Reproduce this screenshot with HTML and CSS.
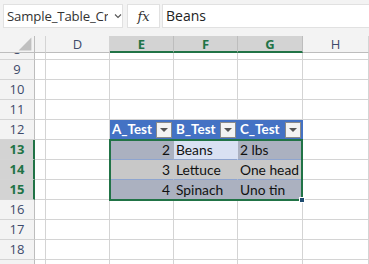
FILE: index.html
```html
<!DOCTYPE html>
<html>
<head>
<meta charset="utf-8">
<link rel="stylesheet" href="styles.css">
</head>
<body>
<div class="app">
  <div class="bar">
    <div class="namebox"><span class="nametext">Sample_Table_Cr</span><svg class="chev" width="8" height="6" viewBox="0 0 8 6"><path d="M1 1.5 L4 4.5 L7 1.5" fill="none" stroke="#555" stroke-width="1.1"/></svg></div>
    <div class="fxbox"><span class="fx">fx</span></div>
    <div class="formula">Beans</div>
  </div>
  <div class="sheet">
    <div class="grid">
      <div class="corner"><svg width="20" height="20" viewBox="0 0 20 20" class="tri"><path d="M18 2 L18 18 L2 18 Z" fill="#c0c0c0"/></svg></div>
      <div class="ch"></div>
      <div class="ch">D</div>
      <div class="ch sel">E</div>
      <div class="ch sel">F</div>
      <div class="ch sel">G</div>
      <div class="ch">H</div>

      <div class="rh r8"><span class="rn8">8</span></div><div class="c r8"></div><div class="c r8"></div><div class="c r8"></div><div class="c r8"></div><div class="c r8"></div><div class="c r8"></div>

      <div class="rh">9</div><div class="c"></div><div class="c"></div><div class="c"></div><div class="c"></div><div class="c"></div><div class="c"></div>
      <div class="rh">10</div><div class="c"></div><div class="c"></div><div class="c"></div><div class="c"></div><div class="c"></div><div class="c"></div>
      <div class="rh">11</div><div class="c"></div><div class="c"></div><div class="c"></div><div class="c"></div><div class="c"></div><div class="c"></div>

      <div class="rh">12</div><div class="c"></div><div class="c"></div>
      <div class="c th"><span>A_Test</span><span class="dd"></span></div>
      <div class="c th"><span>B_Test</span><span class="dd"></span></div>
      <div class="c th"><span>C_Test</span><span class="dd"></span></div>
      <div class="c"></div>

      <div class="rh rsel">13</div><div class="c"></div><div class="c"></div>
      <div class="c td band num">2</div>
      <div class="c td active">Beans</div>
      <div class="c td band">2 lbs</div>
      <div class="c"></div>

      <div class="rh rsel">14</div><div class="c"></div><div class="c"></div>
      <div class="c td plain num">3</div>
      <div class="c td plain">Lettuce</div>
      <div class="c td plain">One head</div>
      <div class="c"></div>

      <div class="rh rsel">15</div><div class="c"></div><div class="c"></div>
      <div class="c td band num last">4</div>
      <div class="c td band last">Spinach</div>
      <div class="c td band last">Uno tin</div>
      <div class="c"></div>

      <div class="rh">16</div><div class="c"></div><div class="c"></div><div class="c"></div><div class="c"></div><div class="c"></div><div class="c"></div>
      <div class="rh">17</div><div class="c"></div><div class="c"></div><div class="c"></div><div class="c"></div><div class="c"></div><div class="c"></div>
      <div class="rh">18</div><div class="c"></div><div class="c"></div><div class="c"></div><div class="c"></div><div class="c"></div><div class="c"></div>
      <div class="rh"></div><div class="c"></div><div class="c"></div><div class="c"></div><div class="c"></div><div class="c"></div><div class="c"></div>
    </div>
    <div class="selbox"><span class="handle"></span></div>
  </div>
</div>
</body>
</html>
```
FILE: styles.css
```css
* { box-sizing: border-box; }
html, body { margin: 0; padding: 0; }
body { width: 369px; height: 264px; overflow: hidden; background: #fff; font-family: "Open Sans", "Noto Sans", sans-serif; }
.app { width: 369px; height: 264px; display: flex; flex-direction: column; }
.bar { height: 36px; background: #f3f3f3; display: flex; align-items: flex-start; padding: 4px 0 0 3px; gap: 4px; flex: none; }
.namebox { width: 120px; height: 24px; background: #fff; border: 1px solid #e1e1e1; display: flex; align-items: center; padding-left: 3px; overflow: hidden; position: relative; }
.nametext { font-size: 13.2px; color: #333; white-space: nowrap; width: 104px; overflow: hidden; letter-spacing: -0.15px; }
.chev { margin-left: 6px; flex: none; }
.fxbox { width: 33px; height: 24px; background: #fff; border: 1px solid #e1e1e1; display: flex; align-items: center; justify-content: center; }
.fx { font-family: "DejaVu Serif", "Liberation Serif", serif; font-style: italic; font-size: 13px; color: #333; }
.formula { flex: 1; height: 24px; background: #fff; border: 1px solid #e1e1e1; border-right: none; margin-left: -2px; font-size: 14px; color: #222; padding-left: 3px; line-height: 22px; }
.sheet { position: relative; flex: 1; overflow: hidden; }
.grid { display: grid; grid-template-columns: 35px 11px 64px 64px 64px 65px 1fr; grid-template-rows: 17px 7px repeat(11, 20px); }
.corner { background: #f3f3f3; border-right: 1px solid #bdbdbd; border-bottom: 1px solid #bdbdbd; position: relative; overflow: hidden; }
.tri { position: absolute; right: 1px; bottom: 0; width: 16px; height: 16px; }
.ch { background: #f3f3f3; border-right: 1px solid #d4d4d4; border-bottom: 1px solid #bdbdbd; font-size: 13px; color: #3d4a6b; text-align: center; line-height: 16px; }
.ch.sel { background: #d3d3d3; color: #217346; font-weight: bold; border-bottom: 2px solid #217346; border-right-color: #bdbdbd; }
.rh { background: #f3f3f3; border-right: 1px solid #bdbdbd; border-bottom: 1px solid #d4d4d4; font-size: 13px; color: #3d4a6b; text-align: center; line-height: 19px; overflow: hidden; }
.rh.rsel { background: #d3d3d3; color: #217346; font-weight: bold; border-right: 2px solid #217346; padding-left: 1px; }
.r8 { overflow: hidden; }
.rn8 { display: block; margin-top: -13px; }
.c { border-right: 1px solid #d4d4d4; border-bottom: 1px solid #d4d4d4; font-family: Lato, "Liberation Sans", sans-serif; font-size: 13.8px; color: #111; line-height: 19px; white-space: nowrap; overflow: hidden; }
.th { background: #4472c4; color: #fff; font-weight: bold; font-size: 13.4px; border-right: 1px solid #4472c4; border-bottom-color: #4472c4; display: flex; align-items: center; justify-content: space-between; padding-left: 2px; padding-right: 1px; }
.dd { width: 16px; height: 16px; background: #f3f3f3; border: 1px solid #8a8a8a; position: relative; flex: none; }
.dd::after { content: ""; position: absolute; left: 3px; top: 5px; border-left: 4px solid transparent; border-right: 4px solid transparent; border-top: 4px solid #555; }
.td { padding: 0 3px 0 2px; border-bottom: 1px solid #8fa5cf; border-right-color: transparent; }
.td.last { border-bottom-color: #d4d4d4; }
.band { background: #abb1c0; }
.plain { background: #c8c8c8; }
.active { background: #d9e1f2; }
.num { text-align: right; }
.selbox { position: absolute; left: 109px; top: 103px; width: 194px; height: 62px; border: 2px solid #217346; pointer-events: none; }
.handle { position: absolute; right: -4px; bottom: -4px; width: 6px; height: 6px; background: #1e4b70; border: 1px solid #fff; }
```
